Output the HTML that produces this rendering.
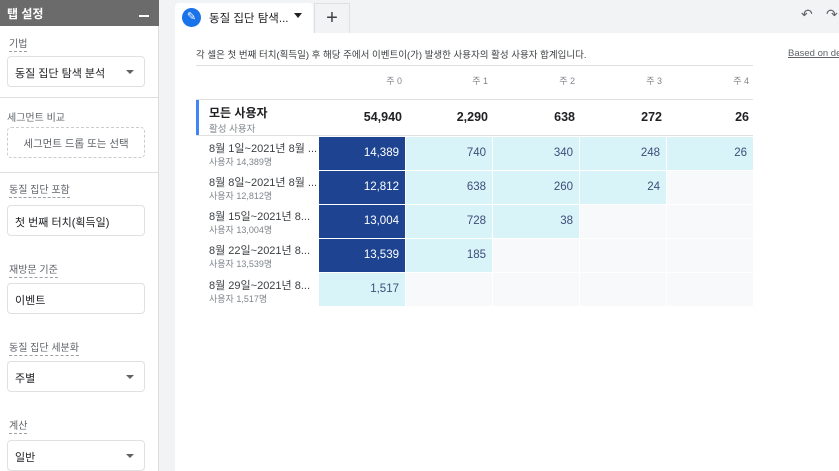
<!DOCTYPE html>
<html><head><meta charset="utf-8"><style>
*{margin:0;padding:0;box-sizing:border-box}
body{width:839px;height:471px;overflow:hidden;background:#f1f3f4;font-family:"Liberation Sans","Noto Sans CJK KR",sans-serif;position:relative;color:#202124}
.a{position:absolute}
.left{left:0;top:0;width:159px;height:471px;background:#fff;border-right:1px solid #dadce0}
.hdr{left:0;top:0;width:159px;height:26px;background:#6b6b6b;color:#fff;font-size:12px;font-weight:bold;padding:5px 7px}
.lbl{font-size:10px;color:#5f6368;left:9px;border-bottom:1px dashed #9aa0a6;line-height:13px}
.box{left:7px;width:138px;height:31px;border:1px solid #e0e0e0;border-radius:4px;font-size:11px;padding:8px 7px;color:#202124}
.arr{position:absolute;right:10px;top:13px;border-left:4px solid transparent;border-right:4px solid transparent;border-top:4px solid #5f6368}
.sep{left:0;width:158px;height:1px;background:#e0e0e0}
.main{left:175px;top:33px;width:664px;height:438px;background:#fff}
.c{position:absolute;height:33px;font-size:11.5px;text-align:right;padding:10px 6px 0 0}
.dk{background:#1e4491;color:#fff}
.lt{background:#d8f4f8;color:#3c4e7a}
.em{background:#f8f9fa}
.rl{position:absolute;left:209px;font-size:11px;color:#3c4043;line-height:13px;white-space:nowrap}
.rl span{display:block;font-size:9px;color:#80868b;line-height:12px}
.wk{position:absolute;top:74px;font-size:9px;color:#80868b;text-align:right;width:80px}
.tot{position:absolute;top:110px;font-size:12.5px;font-weight:bold;text-align:right;width:80px}
</style></head><body>
<div class="a left"></div>
<div class="a hdr">탭 설정<span style="position:absolute;right:10px;top:15px;width:10px;height:2px;background:#fff"></span></div>
<div class="a lbl" style="top:38px">기법</div>
<div class="a box" style="top:56px">동질 집단 탐색 분석<i class="arr"></i></div>
<div class="a sep" style="top:97px"></div>
<div class="a" style="left:7px;top:109px;font-size:10px;color:#5f6368">세그먼트 비교</div>
<div class="a box" style="top:127px;border:1px dashed #ccc;text-align:center;color:#5f6368;font-size:10.5px">세그먼트 드롭 또는 선택</div>
<div class="a sep" style="top:172px"></div>
<div class="a lbl" style="top:184px">동질 집단 포함</div>
<div class="a box" style="top:205px">첫 번째 터치(획득일)</div>
<div class="a lbl" style="top:264px">재방문 기준</div>
<div class="a box" style="top:283px">이벤트</div>
<div class="a lbl" style="top:342px">동질 집단 세분화</div>
<div class="a box" style="top:361px">주별<i class="arr"></i></div>
<div class="a lbl" style="top:420px">계산</div>
<div class="a box" style="top:440px">일반<i class="arr"></i></div>

<div class="a" style="left:175px;top:3px;width:138px;height:31px;background:#fff;border-radius:4px 4px 0 0"></div>
<div class="a" style="left:182px;top:8px;width:19px;height:19px;border-radius:50%;background:#1a73e8;color:#fff;font-size:11px;text-align:center;line-height:19px">✎</div>
<div class="a" style="left:209px;top:10px;font-size:11.5px">동질 집단 탐색...</div>
<div class="a" style="left:294px;top:13px;border-left:4px solid transparent;border-right:4px solid transparent;border-top:5px solid #202124"></div>
<div class="a" style="left:314px;top:3px;width:36px;height:30px;background:#f1f3f4;border:1px solid #e0e0e0;border-bottom:none;font-size:20px;text-align:center;line-height:28px;color:#3c4043">+</div>
<div class="a" style="left:801px;top:6px;font-size:14px;color:#5f6368">↶</div>
<div class="a" style="left:826px;top:6px;font-size:14px;color:#5f6368">↷</div>
<div class="a main"></div>
<div class="a" style="left:196px;top:47px;font-size:9.5px;color:#3c4043;width:557px;border-bottom:1px solid #e0e0e0;padding-bottom:4px">각 셀은 첫 번째 터치(획득일) 후 해당 주에서 이벤트이(가) 발생한 사용자의 활성 사용자 합계입니다.</div>
<div class="a" style="left:788px;top:48px;font-size:9.5px;color:#5f6368;text-decoration:underline;white-space:nowrap">Based on de</div>
<div class="wk" style="left:322px">주 0</div><div class="wk" style="left:408px">주 1</div><div class="wk" style="left:495px">주 2</div><div class="wk" style="left:582px">주 3</div><div class="wk" style="left:669px">주 4</div>
<div class="a" style="left:196px;top:99px;width:557px;height:1px;background:#e0e0e0"></div>
<div class="a" style="left:196px;top:100px;width:3px;height:35px;background:#4285f4"></div>
<div class="a" style="left:196px;top:135px;width:557px;height:1px;background:#e0e0e0"></div>
<div class="a" style="left:209px;top:104px;font-size:12px;font-weight:bold">모든 사용자<div style="font-size:9.5px;color:#80868b;font-weight:normal">활성 사용자</div></div>
<div class="tot" style="left:322px">54,940</div><div class="tot" style="left:408px">2,290</div><div class="tot" style="left:495px">638</div><div class="tot" style="left:582px">272</div><div class="tot" style="left:669px">26</div>

<div class="rl" style="top:143px">8월 1일~2021년 8월 ...<span>사용자 14,389명</span></div>
<div class="rl" style="top:177px">8월 8일~2021년 8월 ...<span>사용자 12,812명</span></div>
<div class="rl" style="top:211px">8월 15일~2021년 8...<span>사용자 13,004명</span></div>
<div class="rl" style="top:245px">8월 22일~2021년 8...<span>사용자 13,539명</span></div>
<div class="rl" style="top:280px">8월 29일~2021년 8...<span>사용자 1,517명</span></div>

<div class="c dk" style="left:319px;top:137px;width:86px">14,389</div>
<div class="c lt" style="left:406px;top:137px;width:86px">740</div>
<div class="c lt" style="left:493px;top:137px;width:86px">340</div>
<div class="c lt" style="left:580px;top:137px;width:86px">248</div>
<div class="c lt" style="left:667px;top:137px;width:86px">26</div>
<div class="c dk" style="left:319px;top:171px;width:86px">12,812</div>
<div class="c lt" style="left:406px;top:171px;width:86px">638</div>
<div class="c lt" style="left:493px;top:171px;width:86px">260</div>
<div class="c lt" style="left:580px;top:171px;width:86px">24</div>
<div class="c em" style="left:667px;top:171px;width:86px"></div>
<div class="c dk" style="left:319px;top:205px;width:86px">13,004</div>
<div class="c lt" style="left:406px;top:205px;width:86px">728</div>
<div class="c lt" style="left:493px;top:205px;width:86px">38</div>
<div class="c em" style="left:580px;top:205px;width:86px"></div>
<div class="c em" style="left:667px;top:205px;width:86px"></div>
<div class="c dk" style="left:319px;top:239px;width:86px">13,539</div>
<div class="c lt" style="left:406px;top:239px;width:86px">185</div>
<div class="c em" style="left:493px;top:239px;width:86px"></div>
<div class="c em" style="left:580px;top:239px;width:86px"></div>
<div class="c em" style="left:667px;top:239px;width:86px"></div>
<div class="c lt" style="left:319px;top:273px;width:86px">1,517</div>
<div class="c em" style="left:406px;top:273px;width:86px"></div>
<div class="c em" style="left:493px;top:273px;width:86px"></div>
<div class="c em" style="left:580px;top:273px;width:86px"></div>
<div class="c em" style="left:667px;top:273px;width:86px"></div>
</body></html>
